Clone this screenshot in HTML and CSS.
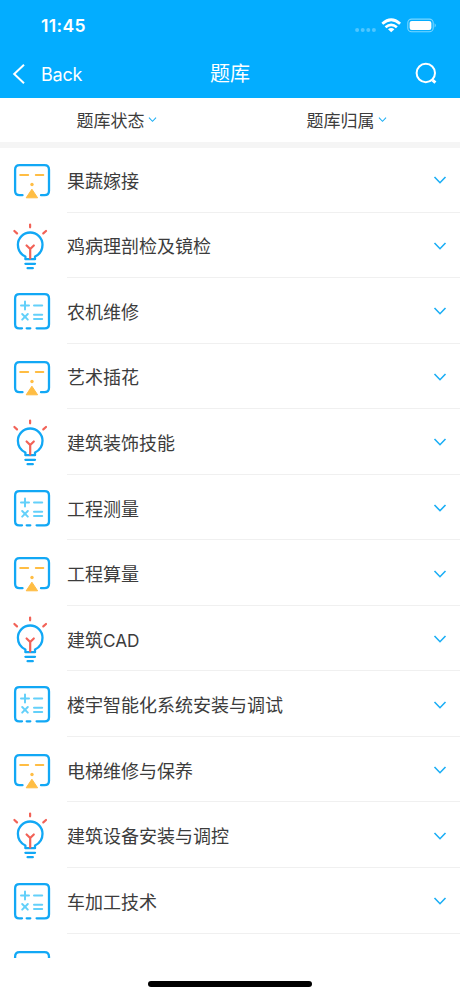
FILE: index.html
```
<!DOCTYPE html>
<html lang="zh-CN">
<head>
<meta charset="utf-8">
<title>题库</title>
<link rel="stylesheet" href="styles.css">
</head>
<body>
<svg class="sprite" aria-hidden="true">
  <symbol id="face" viewBox="0 0 56 65">
    <path class="blue" d="M22.5 48.2H19.5Q15.1 48.2 15.1 43.8V22.8Q15.1 18.2 19.5 18.2H44.5Q49 18.2 49 22.8V43.8Q49 48.2 44.5 48.2H41"/>
    <path class="amber" d="M20.2 28.1H28.2M35.8 28.1H43.3"/>
    <circle class="amber-fill" cx="32" cy="37.5" r="1.7"/>
    <path class="amber-fill" d="M31.9 42.2L37.6 50.8H26.2Z" stroke="#ffbd43" stroke-width="1" stroke-linejoin="round"/>
  </symbol>
  <symbol id="bulb" viewBox="0 0 56 65">
    <path class="blue" d="M25.4 46.2V43.5C21 41.5 17.9 37.2 17.9 31.8A12.3 12.3 0 0 1 42.5 31.8C42.5 37.2 39.4 41.5 35 43.5V46.2ZM25.4 50.8H35M27.6 55.2H32.8"/>
    <path class="red" d="M30.1 11.6V14.3M14.4 18L17 20.4M46 18L43.3 20.4M26.6 32.5L30.2 36L33.8 32.5M30.2 36V45.5"/>
  </symbol>
  <symbol id="calc" viewBox="0 0 56 65">
    <path class="blue" d="M22 50.3H19.2Q15.1 50.3 15.1 46.2V20.5Q15.1 16.2 19.4 16.2H44.7Q49 16.2 49 20.5V46.2Q49 50.3 44.7 50.3H36.6M26.7 50.3H30.3"/>
    <path class="sky" d="M21 27.6H29M25 23.6V31.6M34 27.6H42.2M22.2 36L27.8 41.6M27.8 36L22.2 41.6M34 36.8H42.2M34 41H42.2"/>
  </symbol>
  <symbol id="down" viewBox="0 0 14 10"><path d="M1.5 2L7 7.7L12.5 2"/></symbol>
</svg>
<div class="screen">
  <header class="top">
    <div class="status">
      <span class="time">11:45</span>
      <svg class="signals" viewBox="0 0 84 18">
        <g fill="#4fc6ff"><circle cx="4.6" cy="13" r="2"/><circle cx="10.2" cy="13" r="2"/><circle cx="15.8" cy="13" r="2"/><circle cx="21.4" cy="13" r="2"/></g>
        <g fill="none" stroke="#fff" stroke-width="2.7"><path d="M29.8 6.8Q38.7-1.3 47.6 6.8"/><path d="M33 10.2Q38.7 5.4 44.4 10.2"/></g>
        <path fill="#fff" d="M35.5 12.2Q38.7 9.8 41.9 12.2L38.7 15.2Z"/>
        <rect x="55.3" y="2.1" width="25.4" height="12.6" rx="3.8" fill="none" stroke="#7bd6ff" stroke-width="1.1"/>
        <rect x="57.1" y="3.9" width="21.8" height="9" rx="2.2" fill="#fff"/>
        <path d="M82.1 6.2Q84.5 8.4 82.1 10.6Z" fill="#7bd6ff"/>
      </svg>
    </div>
    <nav class="bar">
      <div class="back">
        <svg class="back-icon" viewBox="0 0 14 22"><path d="M12 1.8L2.2 11L12 20.2"/></svg>
        <span>Back</span>
      </div>
      <h1>题库</h1>
      <svg class="search" viewBox="0 0 24 24"><circle cx="11.8" cy="11" r="9.2"/><path d="M18.6 18.2L21.4 20.6"/></svg>
    </nav>
  </header>
  <div class="filters">
    <div class="filter">题库状态<svg><use href="#down"/></svg></div>
    <div class="filter">题库归属<svg><use href="#down"/></svg></div>
  </div>
  <main class="list">
    <div class="row"><svg class="icon"><use href="#face"/></svg><div class="cell"><span>果蔬嫁接</span><svg class="arrow"><use href="#down"/></svg></div></div>
    <div class="row"><svg class="icon"><use href="#bulb"/></svg><div class="cell"><span>鸡病理剖检及镜检</span><svg class="arrow"><use href="#down"/></svg></div></div>
    <div class="row"><svg class="icon"><use href="#calc"/></svg><div class="cell"><span>农机维修</span><svg class="arrow"><use href="#down"/></svg></div></div>
    <div class="row"><svg class="icon"><use href="#face"/></svg><div class="cell"><span>艺术插花</span><svg class="arrow"><use href="#down"/></svg></div></div>
    <div class="row"><svg class="icon"><use href="#bulb"/></svg><div class="cell"><span>建筑装饰技能</span><svg class="arrow"><use href="#down"/></svg></div></div>
    <div class="row"><svg class="icon"><use href="#calc"/></svg><div class="cell"><span>工程测量</span><svg class="arrow"><use href="#down"/></svg></div></div>
    <div class="row"><svg class="icon"><use href="#face"/></svg><div class="cell"><span>工程算量</span><svg class="arrow"><use href="#down"/></svg></div></div>
    <div class="row"><svg class="icon"><use href="#bulb"/></svg><div class="cell"><span>建筑<span class="latin">CAD</span></span><svg class="arrow"><use href="#down"/></svg></div></div>
    <div class="row"><svg class="icon"><use href="#calc"/></svg><div class="cell"><span>楼宇智能化系统安装与调试</span><svg class="arrow"><use href="#down"/></svg></div></div>
    <div class="row"><svg class="icon"><use href="#face"/></svg><div class="cell"><span>电梯维修与保养</span><svg class="arrow"><use href="#down"/></svg></div></div>
    <div class="row"><svg class="icon"><use href="#bulb"/></svg><div class="cell"><span>建筑设备安装与调控</span><svg class="arrow"><use href="#down"/></svg></div></div>
    <div class="row"><svg class="icon"><use href="#calc"/></svg><div class="cell"><span>车加工技术</span><svg class="arrow"><use href="#down"/></svg></div></div>
    <div class="row"><svg class="icon"><use href="#face"/></svg></div>
  </main>
  <footer class="home"><div class="home-bar"></div></footer>
</div>
</body>
</html>
```
FILE: styles.css
```
* { box-sizing: border-box; }
body {
  margin: 0;
  background: #fff;
  color: #3c3c3c;
  font-family: Inter, "Noto Sans CJK SC", sans-serif;
}
svg { display: block; flex: none; }
.sprite { position: absolute; width: 0; height: 0; }
.screen {
  width: 460px;
  height: 996px;
  display: flex;
  flex-direction: column;
  overflow: hidden;
}
.top { height: 98px; flex: none; background: #03adff; color: #fff; }
.status {
  height: 50px;
  padding: 1px 23px 0 41px;
  display: flex;
  align-items: center;
  justify-content: space-between;
}
.time { font-size: 17.5px; font-weight: 600; letter-spacing: 0.35px; }
.signals { width: 85px; height: 18px; }
.bar {
  height: 48px;
  padding: 0 22px 0 12px;
  display: grid;
  grid-template-columns: 1fr auto 1fr;
  align-items: center;
}
.back { display: flex; align-items: center; gap: 15px; font-size: 18px; letter-spacing: -0.2px; }
.back-icon { width: 14px; height: 22px; }
.back-icon path, .search circle, .search path {
  fill: none;
  stroke: #fff;
  stroke-width: 2;
}
.bar h1 { margin: 0 -10px 0 0; font-size: 20px; font-weight: 400; line-height: 28px; }
.search { width: 24px; height: 24px; justify-self: end; }
.search path { stroke-width: 3; }
.filters {
  height: 50px;
  flex: none;
  display: grid;
  grid-template-columns: 1fr 1fr;
  border-bottom: 6px solid #f5f5f5;
}
.filter {
  display: flex;
  align-items: center;
  justify-content: center;
  gap: 3px;
  padding: 0 0 1px 3px;
  font-size: 17px;
}
.filter svg { width: 9px; height: 7px; }
#down path { fill: none; stroke: #1aaef5; stroke-width: 1.6; }
.list { height: 810px; flex: none; overflow: hidden; }
.row { height: 65.55px; display: flex; }
.row:first-child { margin-top: -1px; }
.icon { width: 56px; height: 65px; }
.cell {
  flex: 1;
  margin-left: 11px;
  padding: 1px 13px 0 0;
  display: flex;
  align-items: center;
  justify-content: space-between;
  border-bottom: 1px solid #f0f0f0;
  font-size: 18px;
}
.latin { font-size: 17.2px; }
.arrow { width: 14px; height: 10px; margin-top: 1px; }
.blue, .amber, .sky, .red { fill: none; stroke-linecap: round; stroke-linejoin: round; }
.blue { stroke: #12a8f5; stroke-width: 2.3; }
.amber { stroke: #ffbd43; stroke-width: 2; }
.amber-fill { fill: #ffbd43; }
.sky { stroke: #63d0fa; stroke-width: 2; }
.red { stroke: #f26257; stroke-width: 2.2; }
.home { flex: 1; display: flex; justify-content: center; align-items: flex-start; padding-top: 23px; }
.home-bar { width: 164px; height: 6px; border-radius: 3px; background: #000; }
```
